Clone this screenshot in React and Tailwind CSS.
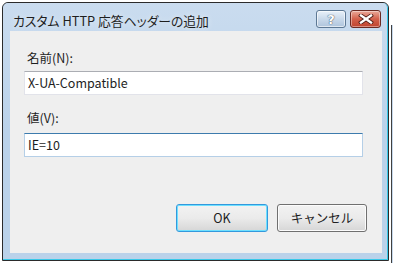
import React from "react";

const font = { fontFamily: '"Noto Sans CJK JP", "Noto Sans", sans-serif' };

export default function App() {
  return (
    <div className="w-[393px] h-[263px] bg-white overflow-hidden relative" style={font}>
      {/* background window edge on the right */}
      <div className="absolute left-[391px] top-[25px] w-[2px] h-[238px] bg-[#c7d9ec] border-l border-[#404040]" />
      {/* window */}
      <div className="ml-[2px] mt-[2px] w-[387px] h-[259px] border border-[#2b2b2b] rounded-t-[6px] bg-[#bad2ea] flex flex-col overflow-hidden">
        <div className="flex-1 flex flex-col border-r border-b border-[#38c8e8] rounded-t-[5px] bg-gradient-to-b from-[#cadcef] via-[#bad2ea] to-[#bad2ea]">
          {/* title bar */}
          <div className="h-[28px] flex items-start relative">
            <span className="ml-[10px] mt-[11px] text-[12.8px] leading-[14px] text-[#1e1e1e] [font-feature-settings:'palt'] [text-shadow:0_0_6px_rgba(255,255,255,0.7)]">
              カスタム HTTP 応答ヘッダーの追加
            </span>
            <div className="absolute left-[313px] top-[7px] flex gap-[4px]">
              <div className="w-[30px] h-[18px] rounded-[3px] border border-[#5d7894] bg-gradient-to-b from-[#e9f1f9] via-[#c9d9ea] to-[#aec4dc] flex items-center justify-center shadow-[inset_0_0_0_1px_rgba(255,255,255,0.6)]">
                <span className="text-[13px] leading-none font-bold text-white [text-shadow:0_0_1px_#3a4a5c,0_0_1px_#3a4a5c]" style={{ fontFamily: '"DejaVu Sans", sans-serif' }}>?</span>
              </div>
              <div className="w-[31px] h-[18px] rounded-[3px] border border-[#6b2a22] bg-gradient-to-b from-[#e9a99a] via-[#d2604b] to-[#c0432e] flex items-center justify-center shadow-[inset_0_0_0_1px_rgba(255,255,255,0.4)]">
                <svg width="16" height="10" viewBox="0 0 16 10">
                  <path d="M3 1.5 L13 8.5 M13 1.5 L3 8.5" stroke="#4a1a14" strokeWidth="4" strokeLinecap="square" />
                  <path d="M3 1.5 L13 8.5 M13 1.5 L3 8.5" stroke="#ffffff" strokeWidth="2.4" strokeLinecap="square" />
                </svg>
              </div>
            </div>
          </div>
          {/* client */}
          <div className="ml-[7px] mr-[5px] h-[222px] bg-[#efefef] flex flex-col pl-[14px] pt-[19px]">
            <div className="pl-[3px] text-[12.5px] leading-[16px] text-[#1e1e1e]">名前(N):</div>
            <div className="mt-[5px] w-[339px] h-[24px] bg-white border border-[#e2e3ea] border-t-[#abadb3] flex items-center pl-[3px] text-[12.5px] text-[#1e1e1e]">
              X-UA-Compatible
            </div>
            <div className="mt-[15px] pl-[3px] text-[12.5px] leading-[16px] text-[#1e1e1e]">値(V):</div>
            <div className="mt-[7px] w-[339px] h-[24px] bg-white border border-[#b5cfe7] border-t-[#3d7bad] flex items-center pl-[3px] text-[12.5px] text-[#1e1e1e]">
              IE=10
            </div>
            <div className="mt-[47px] ml-[152px] flex gap-[9px]">
              <button className="w-[92px] h-[28px] rounded-[3px] border border-[#3399dd] shadow-[inset_0_0_0_1px_#6ee0ff] bg-gradient-to-b from-[#f2f2f2] via-[#ebebeb] to-[#d6d6d6] text-[12.5px] text-[#1e1e1e] flex items-center justify-center">
                OK
              </button>
              <button className="w-[90px] h-[28px] rounded-[3px] border border-[#707070] shadow-[inset_0_0_0_1px_#fcfcfc] bg-gradient-to-b from-[#f2f2f2] via-[#ebebeb] to-[#d6d6d6] text-[12.5px] text-[#1e1e1e] flex items-center justify-center">
                キャンセル
              </button>
            </div>
          </div>
        </div>
      </div>
    </div>
  );
}
